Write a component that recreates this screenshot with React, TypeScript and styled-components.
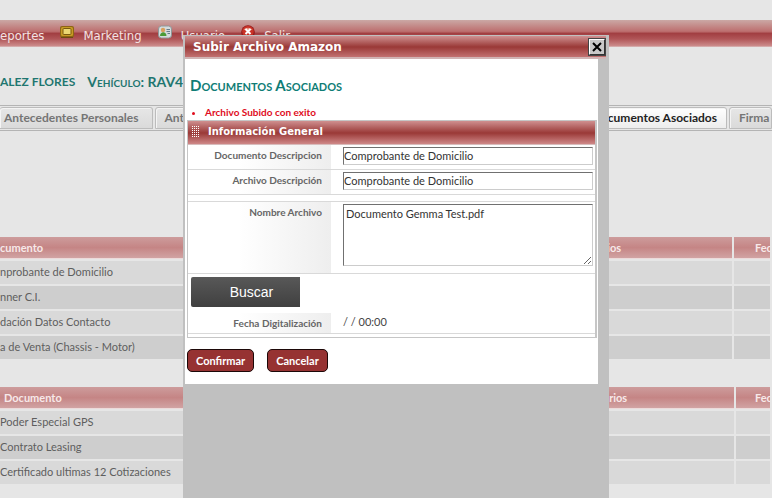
import React from "react";
import styled, { createGlobalStyle } from "styled-components";

const BODY = '"Lato", "Open Sans", sans-serif';
const TITLE = '"DejaVu Sans", sans-serif';
const TEAL = "#0f7d76";

const GlobalStyle = createGlobalStyle`
  * { box-sizing: border-box; }
  body { margin: 0; background: #e6e6e6; font-family: ${BODY}; font-size: 11px; color: #5e5e5e; }
`;

const Page = styled.div`
  position: relative;
  min-height: 100vh;
  overflow: hidden;
  padding-top: 20px;
`;

const Nav = styled.nav`
  display: flex;
  align-items: center;
  height: 27px;
  background: linear-gradient(#cba8a5 0%, #bd6f6f 42%, #a23f42 50%, #b05557 70%, #cc8b8b 96%, #dcc6c6 100%);
`;

const NavLink = styled.a`
  display: flex;
  align-items: center;
  height: 27px;
  padding-top: 4px;
  font: 13px "DejaVu Sans Condensed", "DejaVu Sans", sans-serif;
  color: #f3e3e3;
  text-decoration: none;
`;

const NavIcon = styled.svg`
  flex: none;
  width: 16px;
  height: 14px;
  margin: 0 8px 4px 15px;
`;

const ClientTitle = styled.h1`
  display: flex;
  gap: 12px;
  margin: 25px 0 0;
  font: bold 12px/20px ${BODY};
  color: #1f7670;
  white-space: nowrap;
`;

const Vehicle = styled.span`
  font-size: 14px;
  font-variant: small-caps;
`;

const Tabs = styled.div`
  display: flex;
  gap: 2px;
  height: 26px;
  margin-top: 13px;
  padding: 1px 0 2px;
  border-top: 1px solid #b4b4b4;
  border-bottom: 1px solid #b4b4b4;
`;

const Tab = styled.button<{ $active?: boolean; $grow?: boolean }>`
  flex: ${(p) => (p.$grow ? "1 1 0" : "none")};
  height: 22px;
  padding: 0 9px;
  overflow: hidden;
  border: 1px solid #bcbcbc;
  border-radius: 3px 3px 0 0;
  box-shadow: inset 1px 1px #f4f4f4;
  background: ${(p) => (p.$active ? "linear-gradient(#ffffff, #ededed)" : "linear-gradient(#e6e6e6, #dadada)")};
  font: bold 12px/20px ${BODY};
  color: ${(p) => (p.$active ? "#222" : "#757575")};
  text-align: left;
  white-space: nowrap;
  &:first-child { padding: 0 13px 0 4px; border-left: 0; }
  &:last-child { width: 43px; }
`;

const DocTable = styled.table<{ $top: number }>`
  width: calc(100% + 2px);
  margin: ${(p) => p.$top}px 0 0 -2px;
  table-layout: fixed;
  border-collapse: separate;
  border-spacing: 2px;
  font: 11px ${BODY};
`;

const Column = styled.col<{ $width?: number }>`
  width: ${(p) => (p.$width ? p.$width + "px" : "auto")};
`;

const HeadCell = styled.th<{ $align?: string; $pad?: number }>`
  height: 22px;
  padding: 0 0 0 ${(p) => p.$pad || 0}px;
  overflow: hidden;
  border-bottom: 1px solid #ecdada;
  background: linear-gradient(#cd9c9c, #c58585 50%, #d1a3a3);
  font: bold 11px/20px ${BODY};
  color: #f7e9e9;
  text-align: ${(p) => p.$align || "left"};
  white-space: nowrap;
`;

const BodyRow = styled.tr`
  background: #d9d9d9;
  &:nth-child(even) { background: #cecece; }
`;

const Cell = styled.td`
  height: 23px;
  padding: 0 0 1px;
  overflow: hidden;
  line-height: 20px;
  white-space: nowrap;
`;

const Dialog = styled.section`
  position: absolute;
  top: 35px;
  bottom: 0;
  left: 183px;
  width: 426px;
  padding: 1px 3px 0 2px;
  background: #c0c0c0;
`;

const DialogBar = styled.header`
  display: flex;
  align-items: center;
  justify-content: space-between;
  height: 23px;
  padding-left: 8px;
  border-bottom: 2px solid #d0b4b4;
  background: linear-gradient(#cf9191, #9a3937 52%, #c27171);
`;

const DialogTitle = styled.h2`
  margin: 0;
  font: bold 12px/20px ${TITLE};
  color: #fff;
`;

const CloseButton = styled.button`
  display: grid;
  place-items: center;
  width: 18px;
  height: 18px;
  padding: 0;
  border: 2px solid;
  border-color: #fff #333 #333 #fff;
  outline: 1px solid #444;
  outline-offset: -1px;
  background: #c8c8c8;
`;

const DialogBody = styled.div`
  margin-right: 8px;
  padding: 16px 1px 12px 2px;
  background: #fff;
`;

const SectionTitle = styled.h3`
  margin: 0 0 0 3px;
  font: bold 15px/20px ${BODY};
  font-variant: small-caps;
  color: ${TEAL};
`;

const Messages = styled.ul`
  margin: 10px 0 1px;
  padding-left: 18px;
  font: bold 10px/14px ${BODY};
  color: #e00c1c;
`;

const Panel = styled.form`
  display: block;
`;

const Group = styled.div`
  border: 1px solid #c6c6c6;
  border-right-width: 2px;
  padding-bottom: 3px;
`;

const GroupHead = styled.div`
  display: flex;
  align-items: center;
  gap: 8px;
  height: 24px;
  padding: 0 4px 2px;
  border-bottom: 1px solid #d8bcbc;
  background: linear-gradient(#cf8f8f, #9a3937 52%, #cf8888);
  font: bold 10px/20px ${TITLE};
  color: #fff;
`;

const Field = styled.div<{ $height: number }>`
  display: grid;
  grid-template-columns: 143px 1fr;
  column-gap: 12px;
  height: ${(p) => p.$height}px;
  padding-right: 2px;
  border-bottom: 1px solid #d9d9d9;
`;

const Label = styled.label`
  padding: 2px 9px 0 0;
  background: linear-gradient(90deg, #fff 35%, #eeeeee);
  font: bold 10px/16px ${BODY};
  color: #666;
  text-align: right;
`;

const Spacer = styled.div`
  height: 7px;
  border-bottom: 1px solid #d9d9d9;
`;

const TextInput = styled.input`
  width: 100%;
  height: 18px;
  margin-top: 2px;
  padding: 0 0 1px;
  border: 1px solid #ccc;
  border-top-color: #707070;
  border-left-color: #707070;
  background: #fff;
  font: 11px ${BODY};
  color: #333;
`;

const TextArea = styled.textarea`
  display: block;
  width: 100%;
  height: 62px;
  margin-top: 2px;
  padding: 1px 2px;
  border: 1px solid #ccc;
  border-top-color: #707070;
  border-left-color: #707070;
  background: #fff;
  font: 11px/16px ${BODY};
  color: #333;
`;

const BrowseRow = styled.div`
  padding: 3px 3px 6px;
`;

const BrowseButton = styled.button`
  display: block;
  width: 109px;
  height: 30px;
  padding: 0 0 0 12px;
  border: 0;
  border-radius: 2px 0 0 2px;
  background: linear-gradient(#585858, #404040);
  font: 14px "Liberation Sans", Arial, sans-serif;
  color: #fff;
`;

const Stamp = styled.output`
  font: 11px/18px ${BODY};
  color: #444;
`;

const Actions = styled.div`
  display: flex;
  gap: 13px;
  margin-top: 11px;
`;

const ActionButton = styled.button`
  height: 23px;
  padding: 0 8px;
  border: 1px solid #1c0808;
  border-radius: 5px;
  background: #963232;
  font: bold 11px/20px ${BODY};
  color: #fff;
`;

const dots = [0, 2, 4, 6, 8, 10];

type DocumentTableProps = {
  top: number;
  head: string;
  pad?: number;
  commentsWidth: number;
  commentsPad: number;
  dateWidth: number;
  datePad: number;
  rows: string[];
};

function DocumentTable({ top, head, pad, commentsWidth, commentsPad, dateWidth, datePad, rows }: DocumentTableProps) {
  return (
    <DocTable $top={top}>
      <colgroup>
        <Column />
        <Column $width={commentsWidth} />
        <Column $width={dateWidth} />
      </colgroup>
      <thead>
        <tr>
          <HeadCell $pad={pad}>{head}</HeadCell>
          <HeadCell $align="center" $pad={commentsPad}>Comentarios</HeadCell>
          <HeadCell $pad={datePad}>Fecha</HeadCell>
        </tr>
      </thead>
      <tbody>
        {rows.map((r) => (
          <BodyRow key={r}>
            <Cell>{r}</Cell>
            <Cell />
            <Cell />
          </BodyRow>
        ))}
      </tbody>
    </DocTable>
  );
}

export default function App() {
  return (
    <>
      <GlobalStyle />
      <Page>
        <Nav>
          <NavLink href="#reportes">eportes</NavLink>
          <NavIcon viewBox="0 0 16 14">
            <rect x="1" y="1" width="14" height="11.500" rx="2" fill="#8d6514" />
            <rect x="2" y="2" width="12" height="9" rx="1.500" fill="#c79a24" />
            <rect x="4" y="3.500" width="8" height="6" rx="1" fill="#ecd873" stroke="#7c5a10" />
            <path d="M2 12.500h12" stroke="#6b4a12" />
          </NavIcon>
          <NavLink href="#marketing">Marketing</NavLink>
          <NavIcon viewBox="0 0 16 14">
            <rect x="1.500" y="1" width="13" height="12" rx="3" fill="#d5dbdc" stroke="#8e9899" />
            <circle cx="6" cy="5" r="2.200" fill="#d9a05c" />
            <path d="M3 11c0-5 6.500-5 6.500 0z" fill="#4a9a36" />
            <path d="M9.500 4.500h3.500M9.500 6.500h3.500M10.500 8.500h2.500" stroke="#667e8c" />
          </NavIcon>
          <NavLink href="#usuario">Usuario</NavLink>
          <NavIcon viewBox="0 0 16 14">
            <circle cx="8" cy="7" r="6.800" fill="#8f1717" />
            <circle cx="8" cy="6.500" r="5.800" fill="#c93227" />
            <path d="M3.500 5a5 4 0 0 1 9 0z" fill="#e58a78" />
            <path d="M5.500 4l5 5m0-5l-5 5" stroke="#fff" strokeWidth="2" />
          </NavIcon>
          <NavLink href="#salir">Salir</NavLink>
        </Nav>

        <ClientTitle>
          <span>ALEZ FLORES</span>
          <Vehicle>Vehículo: RAV4</Vehicle>
        </ClientTitle>

        <Tabs>
          <Tab type="button">Antecedentes Personales</Tab>
          <Tab type="button" $grow>Antecedentes Laborales</Tab>
          <Tab type="button" $active>Documentos Asociados</Tab>
          <Tab type="button">Firma</Tab>
        </Tabs>

        <DocumentTable
          top={104}
          head="cumento"
          commentsWidth={288}
          commentsPad={4}
          dateWidth={36}
          datePad={21}
          rows={["nprobante de Domicilio", "nner C.I.", "dación Datos Contacto", "a de Venta (Chassis - Motor)"]}
        />
        <DocumentTable
          top={24}
          head="Documento"
          pad={4}
          commentsWidth={284}
          commentsPad={8}
          dateWidth={34}
          datePad={19}
          rows={["Poder Especial GPS", "Contrato Leasing", "Certificado ultimas 12 Cotizaciones"]}
        />

        <Dialog role="dialog" aria-labelledby="dialog-title">
          <DialogBar>
            <DialogTitle id="dialog-title">Subir Archivo Amazon</DialogTitle>
            <CloseButton type="button" aria-label="Cerrar">
              <svg width="10" height="10" viewBox="0 0 10 10">
                <path d="M1 1l8 8M9 1l-8 8" stroke="#000" strokeWidth="2" />
              </svg>
            </CloseButton>
          </DialogBar>
          <DialogBody>
            <SectionTitle>Documentos Asociados</SectionTitle>
            <Messages>
              <li>Archivo Subido con exito</li>
            </Messages>
            <Panel onSubmit={(e) => e.preventDefault()}>
              <Group>
                <GroupHead>
                  <svg width="8" height="12" viewBox="0 0 8 12">
                    {dots.map((y) =>
                      [0, 2, 4, 6].map((x) => <rect key={x + "-" + y} x={x} y={y} width="1" height="1" fill="#fff" />)
                    )}
                  </svg>
                  Información General
                </GroupHead>
                <Field $height={25}>
                  <Label htmlFor="doc">Documento Descripcion</Label>
                  <TextInput id="doc" defaultValue="Comprobante de Domicilio" />
                </Field>
                <Field $height={25}>
                  <Label htmlFor="desc">Archivo Descripción</Label>
                  <TextInput id="desc" defaultValue="Comprobante de Domicilio" />
                </Field>
                <Spacer />
                <Field $height={72}>
                  <Label htmlFor="file">Nombre Archivo</Label>
                  <TextArea id="file" defaultValue="Documento Gemma Test.pdf" />
                </Field>
                <BrowseRow>
                  <BrowseButton type="button">Buscar</BrowseButton>
                </BrowseRow>
                <Field $height={21}>
                  <Label htmlFor="date">Fecha Digitalización</Label>
                  <Stamp id="date">/ / 00:00</Stamp>
                </Field>
              </Group>
              <Actions>
                <ActionButton type="submit">Confirmar</ActionButton>
                <ActionButton type="button">Cancelar</ActionButton>
              </Actions>
            </Panel>
          </DialogBody>
        </Dialog>
      </Page>
    </>
  );
}
